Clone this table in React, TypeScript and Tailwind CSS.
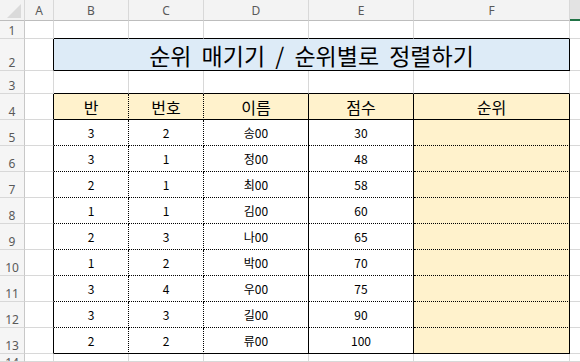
import type { ReactNode } from "react";

type Edge = "g" | "s" | "d" | "n";

const RIGHT: Record<Edge, string> = {
  g: "border-r border-r-[#d8d8d8]",
  s: "border-r border-r-black",
  d: "border-r border-r-black [border-right-style:dotted]",
  n: "",
};

const BOTTOM: Record<Edge, string> = {
  g: "border-b border-b-[#d8d8d8]",
  s: "border-b border-b-black",
  d: "border-b border-b-black [border-bottom-style:dotted]",
  n: "",
};

const COL_LETTERS = ["A", "B", "C", "D", "E", "F", ""];

const ROWS = [
  ["3", "2", "송00", "30"],
  ["3", "1", "정00", "48"],
  ["2", "1", "최00", "58"],
  ["1", "1", "김00", "60"],
  ["2", "3", "나00", "65"],
  ["1", "2", "박00", "70"],
  ["3", "4", "우00", "75"],
  ["3", "3", "길00", "90"],
  ["2", "2", "류00", "100"],
];

const HEADERS = ["반", "번호", "이름", "점수", "순위"];

function Cell({
  right = "g",
  bottom = "g",
  className = "",
  children,
}: {
  right?: Edge;
  bottom?: Edge;
  className?: string;
  children?: ReactNode;
}) {
  return (
    <div className={`flex min-w-0 items-center justify-center ${RIGHT[right]} ${BOTTOM[bottom]} ${className}`}>
      {children}
    </div>
  );
}

function RowHead({ n, cut }: { n: number | string; cut?: boolean }) {
  return (
    <div
      className={`flex justify-center overflow-hidden border-r border-b border-r-[#c8c8c8] border-b-[#d8d8d8] bg-[#f5f5f5] font-['Noto_Sans',sans-serif] text-[12px] leading-none text-[#595959] ${
        cut ? "items-start pt-[3px]" : "items-end pb-[1px]"
      }`}
    >
      {n}
    </div>
  );
}

function ColHeaders() {
  return (
    <>
      <div className="relative border-r border-b border-r-[#d8d8d8] border-b-[#bdbdbd] bg-[#f3f3f3]">
        <svg className="absolute right-[3px] bottom-[2px]" width="14" height="14" viewBox="0 0 14 14">
          <polygon points="14,0 14,14 0,14" fill="#dadada" />
        </svg>
      </div>
      {COL_LETTERS.map((l, i) =>
        i < 6 ? (
          <div
            key={l}
            className="flex items-center justify-center border-r border-b border-r-[#d8d8d8] border-b-[#bdbdbd] bg-[#f3f3f3] pt-[1px] font-['Noto_Sans',sans-serif] text-[12px] text-[#595959]"
          >
            {l}
          </div>
        ) : (
          <div key="g" className="border-b-2 border-b-[#217346] bg-[#e3e3e3]" />
        ),
      )}
    </>
  );
}

function BlankRow({ n, bottom }: { n: number; bottom: Edge }) {
  return (
    <>
      <RowHead n={n} />
      <Cell />
      <Cell bottom={bottom} />
      <Cell bottom={bottom} />
      <Cell bottom={bottom} />
      <Cell bottom={bottom} />
      <Cell bottom={bottom} />
      <Cell right="n" />
    </>
  );
}

export default function App() {
  return (
    <div className="grid h-[362px] w-[580px] grid-cols-[25px_29px_75px_75px_105px_105px_156px_1fr] grid-rows-[21px_18px_32px_23px_26px_26px_26px_26px_26px_26px_26px_26px_26px_26px_1fr] overflow-hidden bg-white font-['Noto_Sans_CJK_KR',sans-serif] text-black">
      <ColHeaders />

      <BlankRow n={1} bottom="s" />

      <RowHead n={2} />
      <Cell right="s" />
      <Cell right="s" bottom="s" className="col-span-5 bg-[#ddebf7] text-[23px] leading-[30px] [word-spacing:5px]">
        순위 매기기 / 순위별로 정렬하기
      </Cell>
      <Cell right="n" />

      <BlankRow n={3} bottom="s" />

      <RowHead n={4} />
      <Cell right="s" />
      {HEADERS.map((h, i) => (
        <Cell
          key={h}
          right={i < 2 ? "d" : "s"}
          bottom="s"
          className="bg-[#fff2cc] text-[16px] leading-none"
        >
          {h}
        </Cell>
      ))}
      <Cell right="n" />

      {ROWS.map((row, r) => {
        const bottom: Edge = r === ROWS.length - 1 ? "s" : "d";
        return (
          <div key={r} className="contents">
            <RowHead n={r + 5} />
            <Cell right="s" />
            {row.map((v, i) => (
              <Cell key={i} right={i < 2 ? "d" : "s"} bottom={bottom} className="text-[12px] leading-none">
                {v}
              </Cell>
            ))}
            <Cell right="s" bottom={bottom} className="bg-[#fff2cc]" />
            <Cell right="n" />
          </div>
        );
      })}

      <RowHead n={14} cut />
      <Cell />
      <Cell />
      <Cell />
      <Cell />
      <Cell />
      <Cell />
      <Cell right="n" />
    </div>
  );
}
